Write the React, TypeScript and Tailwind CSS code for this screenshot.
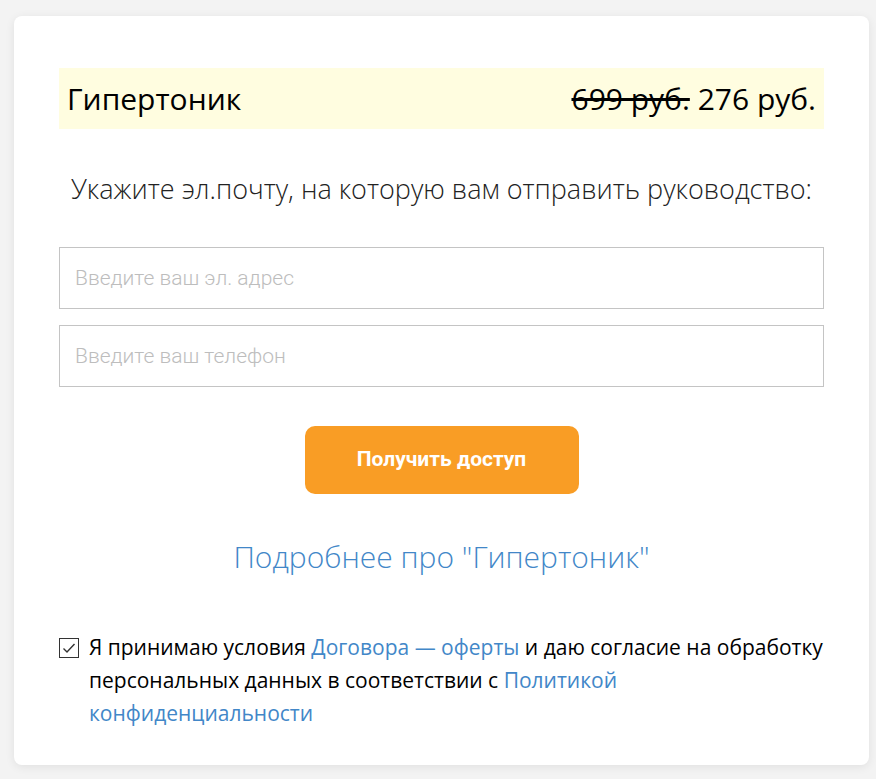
export default function App() {
  return (
    <div className="min-h-[779px] bg-[#f3f3f3] pl-[14px] pr-[7px] pt-[16px] pb-[13px] font-['Open_Sans',sans-serif]">
      <div className="flex flex-col rounded-lg bg-white px-[45px] pt-[52px] pb-[35px] shadow-[0_2px_10px_rgba(0,0,0,0.08)]">
        <div className="flex h-[61px] items-center justify-between bg-[#fffde0] pl-2 pr-2 text-[30px] text-black">
          <span>Гипертоник</span>
          <span>
            <span className="line-through">699 руб.</span> 276 руб.
          </span>
        </div>

        <p className="mt-[42px] text-center text-[27px] leading-[36px] font-light text-[#222]">
          Укажите эл.почту, на которую вам отправить руководство:
        </p>

        <div className="mt-[40px] flex flex-col gap-4">
          <input
            className="h-[62px] border border-[#c4c4c4] px-[15px] font-['Roboto',sans-serif] text-[21px] font-light outline-none placeholder:text-[#bdbdbd]"
            placeholder="Введите ваш эл. адрес"
          />
          <input
            className="h-[62px] border border-[#c4c4c4] px-[15px] font-['Roboto',sans-serif] text-[21px] font-light outline-none placeholder:text-[#bdbdbd]"
            placeholder="Введите ваш телефон"
          />
        </div>

        <button className="mx-auto mt-[39px] h-[68px] w-[274px] rounded-[10px] bg-[#f99d25] font-['Roboto',sans-serif] text-[21px] font-bold text-white">
          Получить доступ
        </button>

        <a className="mt-[43px] text-center text-[30px] leading-[40px] font-light text-[#4287c8]">
          Подробнее про "Гипертоник"
        </a>

        <label className="mt-[54px] flex items-start gap-[10px] text-[21px] leading-[33px] text-black">
          <span className="mt-[7px] flex h-[20px] w-[20px] shrink-0 items-center justify-center border border-[#333] bg-white">
            <svg width="14" height="12" viewBox="0 0 14 12" fill="none">
              <path d="M1.5 6.5 L5 10 L12.5 2" stroke="#333" strokeWidth="1.4" />
            </svg>
          </span>
          <span>
            Я принимаю условия{' '}
            <a className="text-[#4287c8]">Договора — оферты</a> и даю согласие на обработку
            персональных данных в соответствии с{' '}
            <a className="text-[#4287c8]">Политикой конфиденциальности</a>
          </span>
        </label>
      </div>
    </div>
  )
}
